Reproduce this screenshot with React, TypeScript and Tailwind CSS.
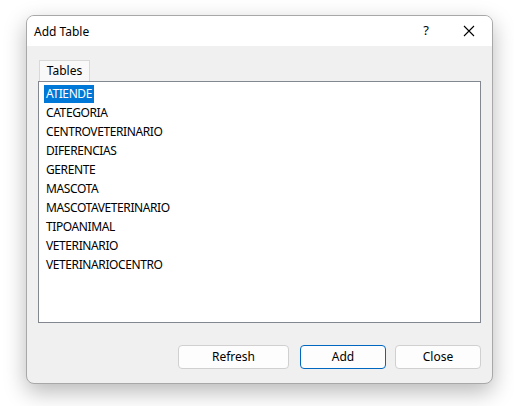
import React from "react";

const items = [
  "ATIENDE",
  "CATEGORIA",
  "CENTROVETERINARIO",
  "DIFERENCIAS",
  "GERENTE",
  "MASCOTA",
  "MASCOTAVETERINARIO",
  "TIPOANIMAL",
  "VETERINARIO",
  "VETERINARIOCENTRO",
];

export default function App() {
  return (
    <div
      className="w-[514px] h-[406px] bg-white pl-[26px] pt-[15px] text-[12px] text-black overflow-hidden"
      style={{ fontFamily: '"Noto Sans", "Segoe UI", sans-serif' }}
    >
      <div className="w-[467px] h-[369px] rounded-[8px] border border-[#a8a8a8] bg-[#f0f0f0] flex flex-col overflow-hidden shadow-[0_8px_22px_rgba(0,0,0,0.28)]">
        <div className="h-[30px] bg-white flex items-center pl-[7px] shrink-0">
          <span className="flex-1 pt-[1px]">Add Table</span>
          <span className="w-[14px] text-center mr-[30px] text-[13px]">?</span>
          <svg width="12" height="12" viewBox="0 0 12 12" className="mr-[17px]">
            <path d="M1 1 L11 11 M11 1 L1 11" stroke="#000" strokeWidth="1.1" />
          </svg>
        </div>
        <div className="flex-1 flex flex-col pl-[11px] pr-[11px] pt-[14px]">
          <div className="w-[51px] h-[21px] border border-b-0 border-[#d9d9d9] bg-[#f9f9f9] flex items-center justify-center ml-[1px]">
            Tables
          </div>
          <div className="w-[443px] h-[242px] border border-[#828790] bg-white pl-[5px] pt-[2px] tracking-[-0.4px]">
            {items.map((it, i) => (
              <div key={it} className="h-[19px] flex items-center">
                <span
                  className={
                    i === 0
                      ? "bg-[#0078d7] text-white px-[2px] h-[18px] flex items-center"
                      : "px-[2px]"
                  }
                >
                  {it}
                </span>
              </div>
            ))}
          </div>
          <div className="flex justify-end mt-[22px]">
            <button className="w-[111px] h-[24px] rounded-[4px] border border-[#d0d0d0] bg-[#fdfdfd] mr-[11px]">
              Refresh
            </button>
            <button className="w-[86px] h-[24px] rounded-[4px] border border-[#0067c0] bg-[#fdfdfd] mr-[9px]">
              Add
            </button>
            <button className="w-[86px] h-[24px] rounded-[4px] border border-[#d0d0d0] bg-[#fdfdfd]">
              Close
            </button>
          </div>
        </div>
      </div>
    </div>
  );
}
